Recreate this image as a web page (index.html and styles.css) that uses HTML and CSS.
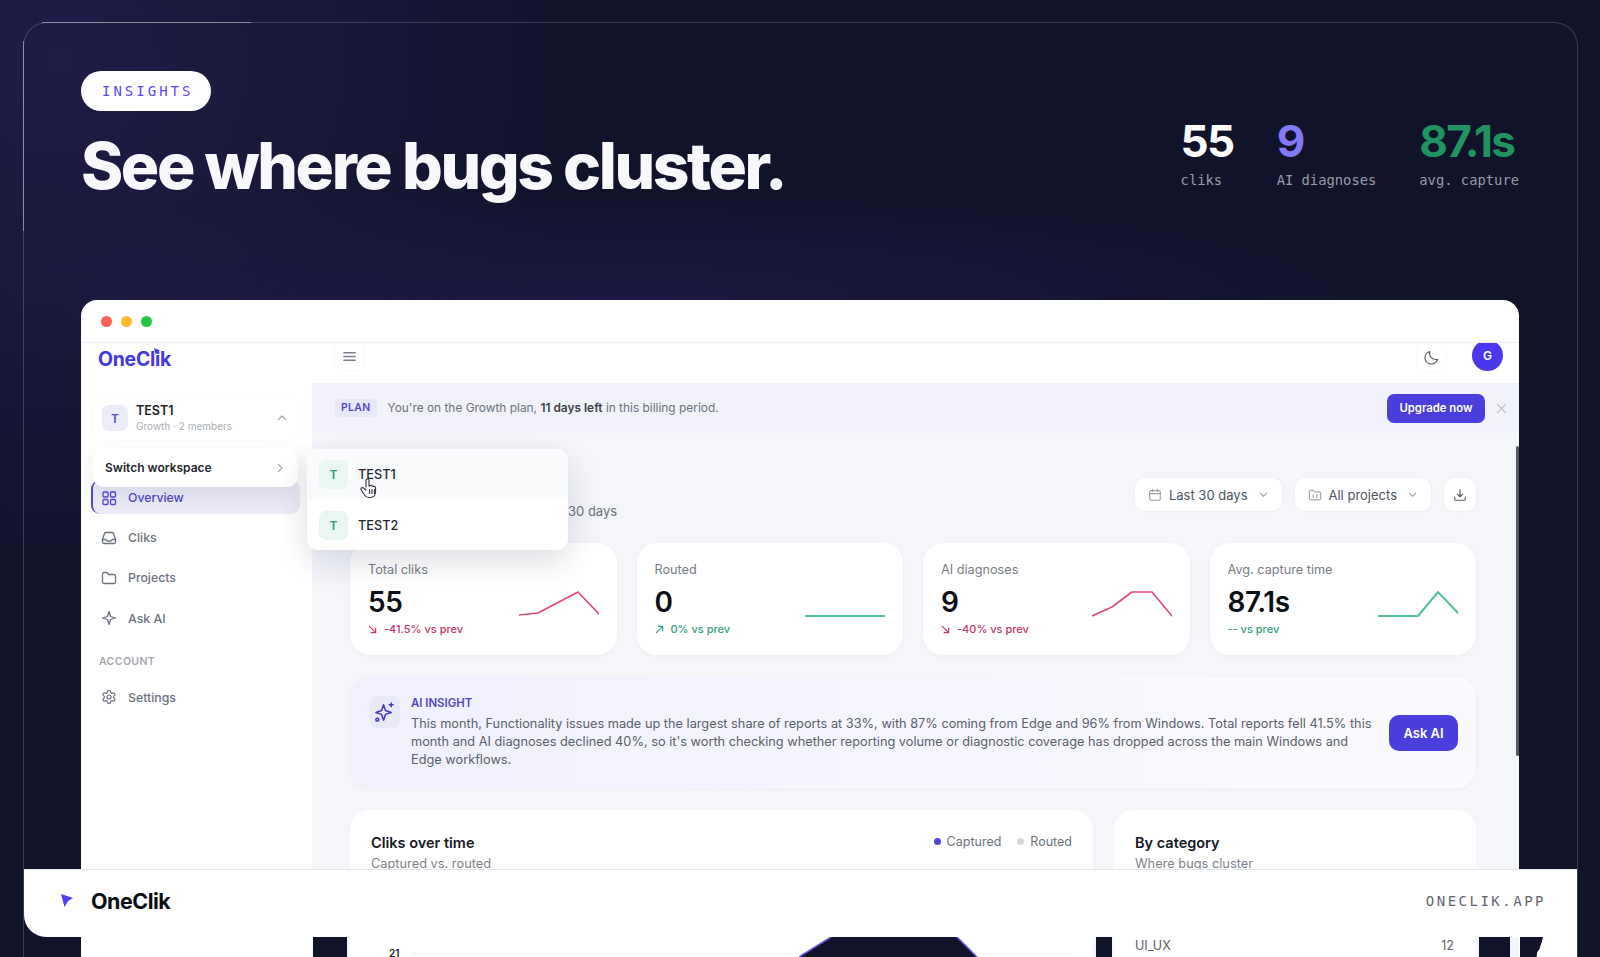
FILE: index.html
```html
<!DOCTYPE html>
<html lang="en">
<head>
    <meta charset="UTF-8">
    <meta name="viewport" content="width=device-width, initial-scale=1.0">
    <title>OneClik Insights</title>
    <link rel="stylesheet" href="styles.css">
</head>
<body>
    <div class="frame">
        <header class="hero">
            <div class="hero-left">
                <span class="pill">INSIGHTS</span>
                <h1 class="hero-title">See where bugs cluster.</h1>
            </div>
            <div class="hero-stats">
                <div class="hero-stat">
                    <div class="hero-num">55</div>
                    <div class="hero-label">cliks</div>
                </div>
                <div class="hero-stat">
                    <div class="hero-num violet">9</div>
                    <div class="hero-label">AI diagnoses</div>
                </div>
                <div class="hero-stat">
                    <div class="hero-num green">87.1s</div>
                    <div class="hero-label">avg. capture</div>
                </div>
            </div>
        </header>

        <div class="window">
            <div class="titlebar">
                <span class="dot red"></span>
                <span class="dot yellow"></span>
                <span class="dot lime"></span>
            </div>
            <div class="app">
                <aside class="sidebar">
                    <div class="brand">
                        OneClik
                        <svg class="brand-mark" viewBox="0 0 12 13"><path d="M0 0 12 4 7 7 3.5 13z"/></svg>
                    </div>
                    <div class="workspace">
                        <span class="avatar violet-soft">T</span>
                        <div class="workspace-text">
                            <div class="workspace-name">TEST1</div>
                            <div class="workspace-plan">Growth · 2 members</div>
                        </div>
                        <svg class="chev" viewBox="0 0 12 12"><path d="M2.5 7.5 6 4l3.5 3.5"/></svg>
                    </div>
                    <nav class="nav">
                        <a class="nav-item active">
                            <svg class="nav-icon" viewBox="0 0 16 16"><rect x="2" y="2" width="5" height="5" rx="1"/><rect x="9.5" y="2" width="5" height="5" rx="1"/><rect x="2" y="9.5" width="5" height="5" rx="1"/><rect x="9.5" y="9.5" width="5" height="5" rx="1"/></svg>
                            Overview
                        </a>
                        <a class="nav-item">
                            <svg class="nav-icon" viewBox="0 0 16 16"><path d="M1.5 9.5 3.5 3.5a1.5 1.5 0 0 1 1.4-1h6.2a1.5 1.5 0 0 1 1.4 1l2 6V12a1.5 1.5 0 0 1-1.5 1.5H3A1.5 1.5 0 0 1 1.5 12z"/><path d="M1.5 9.5H5l1 1.5h4l1-1.5h3.5"/></svg>
                            Cliks
                        </a>
                        <a class="nav-item">
                            <svg class="nav-icon" viewBox="0 0 16 16"><path d="M1.5 4A1.5 1.5 0 0 1 3 2.5h3l1.5 2H13A1.5 1.5 0 0 1 14.5 6v6a1.5 1.5 0 0 1-1.5 1.5H3A1.5 1.5 0 0 1 1.5 12z"/></svg>
                            Projects
                        </a>
                        <a class="nav-item">
                            <svg class="nav-icon" viewBox="0 0 16 16"><path d="M8 1.5 9.5 6.5 14.5 8 9.5 9.5 8 14.5 6.5 9.5 1.5 8 6.5 6.5z"/></svg>
                            Ask AI
                        </a>
                        <div class="nav-heading">ACCOUNT</div>
                        <a class="nav-item">
                            <svg class="nav-icon gear" viewBox="0 0 24 24"><path d="M12.22 2h-.44a2 2 0 0 0-2 2v.18a2 2 0 0 1-1 1.73l-.43.25a2 2 0 0 1-2 0l-.15-.08a2 2 0 0 0-2.73.73l-.22.38a2 2 0 0 0 .73 2.73l.15.1a2 2 0 0 1 1 1.72v.51a2 2 0 0 1-1 1.74l-.15.09a2 2 0 0 0-.73 2.73l.22.38a2 2 0 0 0 2.73.73l.15-.08a2 2 0 0 1 2 0l.43.25a2 2 0 0 1 1 1.73V20a2 2 0 0 0 2 2h.44a2 2 0 0 0 2-2v-.18a2 2 0 0 1 1-1.73l.43-.25a2 2 0 0 1 2 0l.15.08a2 2 0 0 0 2.73-.73l.22-.39a2 2 0 0 0-.73-2.73l-.15-.08a2 2 0 0 1-1-1.74v-.5a2 2 0 0 1 1-1.74l.15-.09a2 2 0 0 0 .73-2.73l-.22-.38a2 2 0 0 0-2.73-.73l-.15.08a2 2 0 0 1-2 0l-.43-.25a2 2 0 0 1-1-1.73V4a2 2 0 0 0-2-2z"/><circle cx="12" cy="12" r="3"/></svg>
                            Settings
                        </a>
                    </nav>
                    <div class="switch-card">
                        <span>Switch workspace</span>
                        <svg class="chev" viewBox="0 0 12 12"><path d="M4.5 2.5 8 6 4.5 9.5"/></svg>
                    </div>
                </aside>

                <main class="main">
                    <div class="topbar">
                        <button class="icon-btn menu">
                            <svg viewBox="0 0 16 16"><path d="M2 4h12M2 8h12M2 12h12"/></svg>
                        </button>
                        <div class="topbar-right">
                            <button class="icon-btn moon">
                                <svg viewBox="0 0 24 24"><path d="M20.5 14.5A9 9 0 0 1 9.5 3.5a9 9 0 1 0 11 11z"/></svg>
                            </button>
                            <span class="user">G</span>
                        </div>
                    </div>
                    <div class="banner">
                        <span class="chip">PLAN</span>
                        <span class="banner-text">You're on the Growth plan, <b>11 days left</b> in this billing period.</span>
                        <button class="btn upgrade">Upgrade now</button>
                        <svg class="close" viewBox="0 0 12 12"><path d="M1.5 1.5l9 9M10.5 1.5l-9 9"/></svg>
                    </div>
                    <div class="content">
                        <div class="page-head">
                            <p class="page-sub">30 days</p>
                            <div class="filters">
                                <button class="filter">
                                    <svg class="filter-icon" viewBox="0 0 16 16"><rect x="2" y="3" width="12" height="11" rx="1.5"/><path d="M2 6.5h12M5 1.5V4M11 1.5V4"/></svg>
                                    Last 30 days
                                    <svg class="filter-chev" viewBox="0 0 12 12"><path d="M2.5 4.5 6 8l3.5-3.5"/></svg>
                                </button>
                                <button class="filter">
                                    <svg class="filter-icon" viewBox="0 0 16 16"><path d="M1.5 4A1.5 1.5 0 0 1 3 2.5h3l1.5 2H13A1.5 1.5 0 0 1 14.5 6v6a1.5 1.5 0 0 1-1.5 1.5H3A1.5 1.5 0 0 1 1.5 12zM6 7.5V11M10 7.5V11"/></svg>
                                    All projects
                                    <svg class="filter-chev" viewBox="0 0 12 12"><path d="M2.5 4.5 6 8l3.5-3.5"/></svg>
                                </button>
                                <button class="filter square">
                                    <svg class="filter-dl" viewBox="0 0 16 16"><path d="M8 2v8M4.8 7 8 10.2 11.2 7M2 10.5V13a1 1 0 0 0 1 1h10a1 1 0 0 0 1-1v-2.5"/></svg>
                                </button>
                            </div>
                        </div>

                        <div class="kpis">
                            <div class="kpi">
                                <div class="kpi-label">Total cliks</div>
                                <div class="kpi-row">
                                    <div>
                                        <div class="kpi-value">55</div>
                                        <div class="kpi-delta down"><svg viewBox="0 0 10 10"><path d="M1.5 1.5l7 7M8.5 3.5v5h-5"/></svg>-41.5% vs prev</div>
                                    </div>
                                    <svg class="spark" viewBox="0 0 80 32"><polyline class="spark-red" points="0,29 19,27 59,6 80,28"/></svg>
                                </div>
                            </div>
                            <div class="kpi">
                                <div class="kpi-label">Routed</div>
                                <div class="kpi-row">
                                    <div>
                                        <div class="kpi-value">0</div>
                                        <div class="kpi-delta up"><svg viewBox="0 0 10 10"><path d="M1.5 8.5l7-7M3.5 1.5h5v5"/></svg>0% vs prev</div>
                                    </div>
                                    <svg class="spark" viewBox="0 0 80 32"><polyline class="spark-green" points="0,30 80,30"/></svg>
                                </div>
                            </div>
                            <div class="kpi">
                                <div class="kpi-label">AI diagnoses</div>
                                <div class="kpi-row">
                                    <div>
                                        <div class="kpi-value">9</div>
                                        <div class="kpi-delta down"><svg viewBox="0 0 10 10"><path d="M1.5 1.5l7 7M8.5 3.5v5h-5"/></svg>-40% vs prev</div>
                                    </div>
                                    <svg class="spark" viewBox="0 0 80 32"><polyline class="spark-red" points="0,30 20,21 40,6 60,6 80,30"/></svg>
                                </div>
                            </div>
                            <div class="kpi">
                                <div class="kpi-label">Avg. capture time</div>
                                <div class="kpi-row">
                                    <div>
                                        <div class="kpi-value">87.1s</div>
                                        <div class="kpi-delta up">-- vs prev</div>
                                    </div>
                                    <svg class="spark" viewBox="0 0 80 32"><polyline class="spark-green" points="0,30 40,30 60,6 80,27"/></svg>
                                </div>
                            </div>
                        </div>

                        <div class="insight">
                            <div class="insight-icon">
                                <svg viewBox="0 0 24 24"><path d="M11 4.5 13 10.5 19 12.5 13 14.5 11 20.5 9 14.5 3 12.5 9 10.5z"/><path d="M19 2.5v4M17 4.5h4"/><circle cx="4.5" cy="20" r="1.5"/></svg>
                            </div>
                            <div class="insight-body">
                                <div class="insight-tag">AI INSIGHT</div>
                                <p>This month, Functionality issues made up the largest share of reports at 33%, with 87% coming from Edge and 96% from Windows. Total reports fell 41.5% this month and AI diagnoses declined 40%, so it's worth checking whether reporting volume or diagnostic coverage has dropped across the main Windows and Edge workflows.</p>
                            </div>
                            <button class="btn ask">Ask AI</button>
                        </div>

                        <div class="panels">
                            <section class="panel">
                                <div class="panel-head">
                                    <div>
                                        <div class="panel-title">Cliks over time</div>
                                        <div class="panel-sub">Captured vs. routed</div>
                                    </div>
                                    <div class="legend">
                                        <span class="legend-dot indigo"></span>Captured
                                        <span class="legend-dot grey"></span>Routed
                                    </div>
                                </div>
                                <div class="chart">
                                    <span class="chart-tick">21</span>
                                    <span class="chart-line"></span>
                                </div>
                            </section>
                            <section class="panel">
                                <div class="panel-title">By category</div>
                                <div class="panel-sub">Where bugs cluster</div>
                                <div class="cat-row">
                                    <span>UI_UX</span>
                                    <span>12</span>
                                </div>
                            </section>
                        </div>
                    </div>
                    <span class="scrollbar"></span>
                </main>

                <div class="ws-menu">
                    <div class="ws-item hover">
                        <span class="avatar green-soft">T</span>TEST1
                    </div>
                    <div class="ws-item">
                        <span class="avatar green-soft">T</span>TEST2
                    </div>
                    <svg class="hand" viewBox="0 0 24 24"><path d="M9 11V4.5a1.5 1.5 0 0 1 3 0V10l1-.2a1.5 1.5 0 0 1 2.5.5l1 .1a1.5 1.5 0 0 1 2 1v4.600c0 3-2 5.500-5 5.500h-2c-2 0-3-1-4-2.500l-3.500-5.500a1.500 1.500 0 0 1 2.500-1.500L9 14M12.500 13.500v4M15 13.500v4M17.500 13.500v4"/></svg>
                </div>
            </div>
        </div>
    </div>

    <!-- torn video frames along the bottom edge -->
    <div class="glitch g1"></div>
    <div class="glitch g2"></div>
    <div class="glitch g3"></div>
    <div class="glitch g4"></div>
    <div class="glitch tear"></div>
    <div class="glitch g5"></div>
    <svg class="glitch-shape" viewBox="0 0 180 20">
        <path class="shape-fill" d="M32 0H158L178 20H0z"/>
        <path class="shape-edge" d="M0 20 32 0M158 0 178 20"/>
    </svg>

    <div class="footer-bar">
        <div class="footer-brand">
            <svg class="footer-mark" viewBox="0 0 12 13"><path d="M0 0 12 4 7 7 3.5 13z"/></svg>
            OneClik
        </div>
        <div class="footer-url">ONECLIK.APP</div>
    </div>
</body>
</html>
```

FILE: styles.css
```css
* {
    box-sizing: border-box;
}
html, body {
    height: 100%;
}
body {
    margin: 0;
    position: relative;
    height: 957px;
    overflow: hidden;
    font-family: Inter, "Noto Sans", sans-serif;
    color: #111827;
    background-color: #11132a;
    background-image:
        radial-gradient(760px 110px at 620px 300px, rgba(38, 28, 92, .5), transparent),
        radial-gradient(520px 520px at 60px 60px, rgba(40, 34, 92, .6), transparent);
}
svg {
    display: block;
    fill: none;
    stroke: currentColor;
    stroke-linecap: round;
    stroke-linejoin: round;
}
button {
    font-family: inherit;
    cursor: pointer;
}

/* slide frame */
.frame {
    position: relative;
    height: 960px;
    margin: 22px 22px 0 23px;
    padding: 48px 58px 0 57px;
    border: 1px solid rgba(255, 255, 255, .17);
    border-bottom: none;
    border-radius: 24px 24px 0 0;
}
.frame::before {
    content: "";
    position: absolute;
    top: -1px;
    left: 18px;
    width: 209px;
    border-top: 1px solid rgba(255, 255, 255, .4);
}
.frame::after {
    content: "";
    position: absolute;
    top: 18px;
    left: -1px;
    height: 190px;
    border-left: 1px solid rgba(255, 255, 255, .4);
}
.hero {
    display: flex;
    justify-content: space-between;
    height: 229px;
}
.pill {
    display: inline-block;
    height: 40px;
    padding: 0 18px 0 21px;
    font: 14px/40px "DejaVu Sans Mono", monospace;
    letter-spacing: 3px;
    color: #5a48f5;
    background-color: #fff;
    border-radius: 20px;
}
.hero-title {
    margin: 17px 0 0;
    font-size: 64px;
    line-height: 76px;
    font-weight: 800;
    letter-spacing: -2.4px;
    color: #f8f8fb;
}
.hero-stats {
    display: flex;
    gap: 43px;
    padding-top: 45px;
}
.hero-num {
    font-size: 44px;
    line-height: 50px;
    font-weight: 700;
    letter-spacing: -1.6px;
    color: #fff;
}
.hero-num.violet {
    color: #8179f6;
}
.hero-num.green {
    color: #1f9460;
}
.hero-label {
    margin-top: 4px;
    font: 13.8px/20px "DejaVu Sans Mono", monospace;
    color: #9a9bab;
}

/* browser window */
.window {
    height: 700px;
    background-color: #fff;
    border-radius: 16px 16px 0 0;
    overflow: hidden;
}
.titlebar {
    display: flex;
    align-items: center;
    gap: 9px;
    height: 43px;
    padding-left: 20px;
    border-bottom: 1px solid #eeeff2;
}
.dot {
    width: 11px;
    height: 11px;
    border-radius: 50%;
}
.red {
    background-color: #fe5f57;
}
.yellow {
    background-color: #febb2e;
}
.lime {
    background-color: #27c840;
}
.app {
    position: relative;
    display: flex;
    height: 657px;
}

/* sidebar */
.sidebar {
    position: relative;
    flex: 0 0 231px;
    padding: 0 14px 0 12px;
}
.brand {
    position: relative;
    height: 33px;
    padding-left: 5px;
    font-size: 19.5px;
    line-height: 33px;
    font-weight: 700;
    letter-spacing: -.3px;
    color: #4338dc;
}
.brand-mark {
    position: absolute;
    top: 5px;
    left: 61px;
    width: 6px;
    height: 7px;
    fill: #4338dc;
    stroke: none;
}
.workspace {
    display: flex;
    align-items: center;
    height: 44px;
    margin-top: 20px;
    padding: 0 10px 0 9px;
    background-color: #fff;
    border-radius: 10px;
    box-shadow: 0 0 3px rgba(17, 24, 39, .05);
}
.avatar {
    display: flex;
    align-items: center;
    justify-content: center;
    flex: none;
    width: 26px;
    height: 26px;
    font-size: 12px;
    font-weight: 600;
    border-radius: 7px;
}
.violet-soft {
    color: #5b50cc;
    background-color: #edecfb;
}
.green-soft {
    width: 29px;
    height: 29px;
    color: #2f9d7c;
    background-color: #e9f6f1;
}
.workspace-text {
    flex: 1;
    margin: -1px 0 0 8px;
}
.workspace-name {
    font-size: 12.5px;
    line-height: 16px;
    font-weight: 600;
    color: #1c1f2b;
}
.workspace-plan {
    font-size: 10px;
    line-height: 14px;
    color: #a9adb6;
}
.chev {
    width: 12px;
    height: 12px;
    stroke: #a3a7b0;
    stroke-width: 1.2;
}
.nav {
    margin-top: 41px;
}
.nav-item {
    display: flex;
    align-items: center;
    gap: 11px;
    height: 33px;
    margin-bottom: 7.2px;
    padding-left: 8px;
    font-size: 12.3px;
    font-weight: 500;
    color: #6b7280;
}
.nav-icon {
    width: 16px;
    height: 16px;
    stroke: #6b7280;
    stroke-width: 1.3;
}
.nav-icon.gear {
    stroke-width: 1.8;
}
.nav-item.active {
    height: 34px;
    margin: -1px -2px 7.2px;
    padding-top: 1px;
    color: #4f46c8;
    background-color: #ecebf7;
    border-left: 2px solid #5046d8;
    border-radius: 9px;
}
.nav-item.active .nav-icon {
    stroke: #5046d8;
}
.nav-heading {
    margin: 20px 0 12px 6px;
    font-size: 10.5px;
    line-height: 14px;
    font-weight: 600;
    letter-spacing: .4px;
    color: #a4a8b1;
}
.switch-card {
    position: absolute;
    top: 105px;
    left: 12px;
    display: flex;
    align-items: center;
    justify-content: space-between;
    width: 205px;
    height: 39px;
    padding: 0 12px;
    font-size: 12px;
    font-weight: 600;
    color: #23262f;
    background-color: #fff;
    border-radius: 11px;
    box-shadow: 0 8px 22px rgba(30, 30, 70, .1);
}

/* main column */
.main {
    position: relative;
    flex: 1;
    min-width: 0;
    background-color: #f4f6fa;
}
.topbar {
    display: flex;
    justify-content: space-between;
    height: 40px;
    padding: 0 16px 0 23px;
    background-color: #fff;
    overflow: hidden;
}
.topbar-right {
    display: flex;
    gap: 27px;
}
.icon-btn {
    display: flex;
    align-items: center;
    justify-content: center;
    width: 28px;
    height: 28px;
    padding: 0;
    color: #777c86;
    background-color: #fff;
    border: none;
    border-radius: 6px;
    box-shadow: 0 0 3px rgba(17, 24, 39, .06);
}
.icon-btn svg {
    width: 15px;
    height: 15px;
    stroke-width: 1.5;
}
.icon-btn.menu {
    margin-top: -1px;
}
.icon-btn.moon {
    color: #555a64;
}
.icon-btn.moon svg {
    width: 17px;
    height: 17px;
    stroke-width: 1.7;
}
.user {
    width: 31px;
    height: 31px;
    margin-top: -3px;
    font-size: 12px;
    font-weight: 600;
    line-height: 31px;
    text-align: center;
    color: #fff;
    background-color: #4a38ec;
    border-radius: 50%;
}
.banner {
    display: flex;
    align-items: center;
    height: 50px;
    padding: 0 12px 0 23px;
    background-color: #f2f2fb;
}
.chip {
    height: 18px;
    padding: 0 6px;
    font-size: 10.5px;
    line-height: 18px;
    font-weight: 600;
    letter-spacing: .3px;
    color: #4f46c8;
    background-color: #e8e7f9;
    border-radius: 5px;
}
.banner-text {
    flex: 1;
    margin: -1px 0 0 11px;
    font-size: 11.9px;
    color: #6b7280;
}
.banner-text b {
    font-weight: 600;
    color: #3b3f4a;
}
.btn {
    font-weight: 600;
    color: #fff;
    background-color: #4a3fdc;
    border: none;
}
.upgrade {
    width: 98px;
    height: 29px;
    padding: 0;
    font-size: 11.3px;
    border-radius: 7px;
}
.close {
    width: 11px;
    height: 11px;
    margin-left: 11px;
    stroke: #b8bbc4;
    stroke-width: 1.2;
}
.scrollbar {
    position: absolute;
    top: 103px;
    right: 0;
    width: 3px;
    height: 310px;
    background-color: #55575f;
    border-radius: 2px;
}

/* dashboard content */
.content {
    padding: 45px 43px 0 38px;
}
.page-head {
    display: flex;
    justify-content: space-between;
    height: 42px;
}
.page-sub {
    margin: 24px 0 0;
    padding-left: 218px;
    font-size: 13px;
    line-height: 18px;
    color: #6b7280;
}
.filters {
    display: flex;
    gap: 13px;
}
.filter {
    display: flex;
    align-items: center;
    height: 33px;
    padding: 0 13px;
    font-size: 13px;
    color: #4b5563;
    background-color: #fff;
    border: none;
    border-radius: 10px;
    box-shadow: 0 0 3px rgba(17, 24, 39, .05);
}
.filter-icon {
    width: 14px;
    height: 14px;
    margin-right: 7px;
    stroke: #8b8f98;
    stroke-width: 1.1;
}
.filter-chev {
    width: 11px;
    height: 11px;
    margin-left: 10px;
    stroke: #9a9ea6;
    stroke-width: 1.2;
}
.filter.square {
    justify-content: center;
    width: 32px;
    padding: 0;
}
.filter-dl {
    width: 14px;
    height: 14px;
    stroke: #555a64;
    stroke-width: 1.3;
}
.kpis {
    display: grid;
    grid-template-columns: repeat(4, 1fr);
    gap: 20px;
    margin-top: 23px;
}
.kpi {
    height: 112px;
    padding: 18px 18px 0;
    background-color: #fff;
    border-radius: 20px;
    box-shadow: 0 1px 4px rgba(17, 24, 39, .04);
}
.kpi-label {
    font-size: 12.7px;
    line-height: 18px;
    color: #777c86;
}
.kpi-row {
    display: flex;
    justify-content: space-between;
    margin-top: 7px;
}
.kpi-value {
    font-size: 28px;
    line-height: 32px;
    font-weight: 600;
    letter-spacing: -.4px;
    color: #0d0f16;
}
.kpi-delta {
    display: flex;
    align-items: center;
    gap: 7px;
    margin-top: 4px;
    font-size: 11px;
    line-height: 14px;
    font-weight: 500;
}
.kpi-delta svg {
    width: 9px;
    height: 9px;
    stroke-width: 1.3;
}
.down {
    color: #c0395f;
}
.up {
    color: #31a07e;
}
.spark {
    flex: none;
    width: 80px;
    height: 32px;
}
.spark-red {
    stroke: #df4a6d;
    stroke-width: 1.6;
}
.spark-green {
    stroke: #52c09a;
    stroke-width: 2;
}
.insight {
    display: flex;
    align-items: center;
    gap: 11px;
    height: 111px;
    margin-top: 22px;
    padding: 0 18px 0 19px;
    background: linear-gradient(90deg, #f0f1fd, #fafafe);
    border-radius: 20px;
    box-shadow: 0 1px 4px rgba(17, 24, 39, .04);
}
.insight-icon {
    align-self: flex-start;
    flex: none;
    width: 31px;
    height: 32px;
    margin-top: 19px;
    padding: 4px;
    color: #4438d0;
    background-color: #e9e9fa;
    border-radius: 9px;
}
.insight-icon svg {
    width: 23px;
    height: 24px;
    stroke-width: 1.6;
}
.insight-body {
    flex: 0 0 964px;
    margin-right: 3px;
}
.insight-tag {
    margin-top: -1px;
    font-size: 11.4px;
    line-height: 14px;
    font-weight: 600;
    color: #4f46c8;
}
.insight-body p {
    margin: 5px 0 0;
    font-size: 12.75px;
    line-height: 18px;
    color: #5b606b;
}
.ask {
    flex: none;
    width: 69px;
    height: 36px;
    padding: 0;
    font-size: 13px;
    border-radius: 10px;
}
.panels {
    display: grid;
    grid-template-columns: 743fr 362fr;
    gap: 21px;
    margin-top: 22px;
}
.panel {
    height: 300px;
    padding: 23px 21px 0;
    background-color: #fff;
    border-radius: 20px;
}
.panel-head {
    display: flex;
    justify-content: space-between;
}
.panel-title {
    font-size: 14.5px;
    line-height: 20px;
    font-weight: 600;
    color: #16181f;
}
.panel-sub {
    margin-top: 3px;
    font-size: 12.8px;
    line-height: 16px;
    color: #7d828c;
}
.legend {
    display: flex;
    align-items: flex-start;
    margin-top: 1px;
    font-size: 12.5px;
    line-height: 16px;
    color: #6b7280;
}
.legend-dot {
    width: 7px;
    height: 7px;
    margin: 4px 6px 0 16px;
    border-radius: 50%;
}
.indigo {
    background-color: #4f46d8;
}
.grey {
    background-color: #d4d6da;
}
.chart {
    position: relative;
    height: 100px;
    margin-top: 67px;
}
.chart-tick {
    position: absolute;
    top: 8px;
    left: 18px;
    font-size: 10px;
    font-weight: 600;
    color: #222;
}
.chart-line {
    position: absolute;
    top: 14px;
    left: 42px;
    right: 0;
    border-top: 1px solid #f0f1f4;
}
.cat-row {
    display: flex;
    justify-content: space-between;
    margin-top: 65px;
    padding-right: 1px;
    font-size: 12.5px;
    line-height: 18px;
    color: #5b606b;
}

/* workspace dropdown */
.ws-menu {
    position: absolute;
    top: 106px;
    left: 226px;
    width: 261px;
    height: 101px;
    background-color: #fff;
    border-radius: 11px;
    box-shadow: 0 12px 34px rgba(30, 30, 70, .14);
}
.ws-item {
    display: flex;
    align-items: center;
    gap: 10px;
    height: 50px;
    padding-left: 12px;
    font-size: 12.7px;
    font-weight: 500;
    color: #23262f;
}
.ws-item + .ws-item {
    height: 51px;
    padding-top: 1px;
}
.ws-item.hover {
    background-color: #f9fafb;
    border-radius: 11px 11px 0 0;
}
.hand {
    position: absolute;
    top: 26px;
    left: 50px;
    width: 24px;
    height: 26px;
    color: #3a3d45;
    fill: #fff;
    stroke-width: 1.2;
}

/* torn frames over the window bottom */
.glitch {
    position: absolute;
    top: 937px;
    height: 20px;
    background-color: #11132a;
}
.g1 {
    left: 24px;
    width: 57px;
}
.g2 {
    left: 313px;
    width: 34px;
}
.g3 {
    left: 1096px;
    width: 16px;
}
.g4 {
    left: 1479px;
    width: 31px;
}
.glitch.tear {
    left: 1519px;
    width: 58px;
    background-color: #fff;
}
.g5 {
    left: 1520px;
    width: 23px;
    clip-path: polygon(0 0, 100% 0, 95% 25%, 90% 40%, 85% 60%, 75% 75%, 72% 100%, 0 100%);
}
.glitch-shape {
    position: absolute;
    top: 937px;
    left: 799px;
    width: 180px;
    height: 20px;
}
.shape-fill {
    fill: #11132a;
    stroke: none;
}
.shape-edge {
    stroke: #6a5ce0;
    stroke-width: 1.5;
}

/* footer strip */
.footer-bar {
    position: absolute;
    top: 869px;
    left: 24px;
    right: 23px;
    display: flex;
    align-items: center;
    justify-content: space-between;
    height: 68px;
    padding: 0 31px 6px 37px;
    background-color: #fff;
    border-top: 1px solid #e6e7ea;
    border-radius: 0 0 0 22px;
}
.footer-brand {
    display: flex;
    align-items: center;
    gap: 18px;
    font-size: 21.5px;
    font-weight: 700;
    letter-spacing: -.5px;
    color: #0b0c12;
}
.footer-mark {
    width: 12px;
    height: 13px;
    fill: #4f3cf5;
    stroke: none;
}
.footer-url {
    font: 14px "DejaVu Sans Mono", monospace;
    letter-spacing: 2.5px;
    color: #63656e;
}
```
